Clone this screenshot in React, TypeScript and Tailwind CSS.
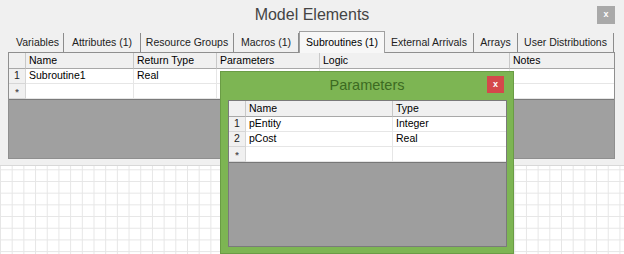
import React from "react";

const tabs = [
  { label: "Variables", w: 52 },
  { label: "Attributes (1)", w: 77 },
  { label: "Resource Groups", w: 93 },
  { label: "Macros (1)", w: 65 },
  { label: "Subroutines (1)", w: 86, active: true },
  { label: "External Arrivals", w: 89 },
  { label: "Arrays", w: 44 },
  { label: "User Distributions", w: 96 },
];

function Cell({ children, last }: { children?: React.ReactNode; last?: boolean }) {
  return (
    <div className={`h-[15px] flex items-center pl-[3px] whitespace-nowrap overflow-hidden border-b border-[#e6e6e6] ${last ? "" : "border-r border-r-[#e6e6e6]"}`}>
      {children}
    </div>
  );
}

function RowHead({ children }: { children?: React.ReactNode }) {
  return (
    <div className="h-[15px] flex items-center justify-center bg-[#f0f0f0] border-r border-b border-[#d6d6d6] text-[#222]">
      {children}
    </div>
  );
}

function Head({ children, last }: { children?: React.ReactNode; last?: boolean }) {
  return (
    <div className={`h-[16px] flex items-center pl-[3px] bg-[#f0f0f0] border-b border-[#a8a8a8] whitespace-nowrap overflow-hidden ${last ? "" : "border-r border-r-[#c8c8c8]"}`}>
      {children}
    </div>
  );
}

const Star = () => <span className="text-[9px] font-bold leading-none text-[#555] mt-[2px]">*</span>;

export default function App() {
  return (
    <div className="w-[624px] h-[254px] relative overflow-hidden flex flex-col font-['Liberation_Sans',Arial,sans-serif] text-[10.5px] text-black">
      {/* Model Elements window */}
      <div className="h-[166px] shrink-0 bg-[#f0f0f0] border-b border-[#d8d8d8] flex flex-col">
        <div className="h-[30px] relative flex items-center justify-center">
          <span className="text-[16px] text-[#444]">Model Elements</span>
          <div className="absolute left-[597px] top-[6px] w-[18px] h-[18px] bg-[#a9a9a9] text-white text-[9px] font-bold flex items-center justify-center">x</div>
        </div>
        <div className="h-[22px] flex items-end pl-[12px]">
          {tabs.map((t) =>
            t.active ? (
              <div
                key={t.label}
                style={{ width: t.w }}
                className="h-[22px] -mb-px relative z-10 bg-[#f7f7f7] border border-b-0 border-[#a0a0a0] flex items-center justify-center whitespace-nowrap"
              >
                {t.label}
              </div>
            ) : (
              <div
                key={t.label}
                style={{ width: t.w }}
                className="h-[19px] flex items-center justify-center whitespace-nowrap border-r border-[#8c8c8c] text-[#222]"
              >
                {t.label}
              </div>
            )
          )}
        </div>
        <div className="ml-[8px] mr-[9px] h-[107px] border border-[#8f8f8f] bg-[#a0a0a0] flex flex-col">
          <div className="grid grid-cols-[17px_108px_83px_103px_190px_1fr] bg-white">
            <Head />
            <Head>Name</Head>
            <Head>Return Type</Head>
            <Head>Parameters</Head>
            <Head>Logic</Head>
            <Head last>Notes</Head>
            <RowHead>1</RowHead>
            <Cell>Subroutine1</Cell>
            <Cell>Real</Cell>
            <Cell />
            <Cell />
            <Cell last />
            <RowHead><Star /></RowHead>
            <Cell />
            <Cell />
            <Cell />
            <Cell />
            <Cell last />
          </div>
          <div className="flex-1 border-t border-[#7a7a7a]" />
        </div>
      </div>

      {/* canvas */}
      <div className="flex-1 bg-white bg-[linear-gradient(to_right,#e6e6e6_1px,transparent_1px),linear-gradient(to_bottom,#e6e6e6_1px,transparent_1px)] [background-size:11.7px_11.7px] [background-position:0_3.3px]" />

      {/* Parameters dialog */}
      <div className="absolute left-[221px] top-[72px] w-[292px] h-[181px] bg-[#7db553] flex flex-col shadow-[0_0_0_1px_#6a9c45]">
        <div className="h-[28px] relative flex items-center justify-center">
          <span className="text-[14.5px] text-[#3c6b22]">Parameters</span>
          <div className="absolute left-[266px] top-[4px] w-[17px] h-[17px] bg-[#d4484b] text-white text-[9px] font-bold flex items-center justify-center">x</div>
        </div>
        <div className="ml-[7px] mr-[6px] mb-[6px] flex-1 border border-[#7a7a7a] bg-[#9e9e9e] flex flex-col">
          <div className="grid grid-cols-[17px_147px_1fr] bg-white">
            <Head />
            <Head>Name</Head>
            <Head last>Type</Head>
            <RowHead>1</RowHead>
            <Cell>pEntity</Cell>
            <Cell last>Integer</Cell>
            <RowHead>2</RowHead>
            <Cell>pCost</Cell>
            <Cell last>Real</Cell>
            <RowHead><Star /></RowHead>
            <Cell />
            <Cell last />
          </div>
          <div className="flex-1 border-t border-[#777]" />
        </div>
      </div>
    </div>
  );
}
